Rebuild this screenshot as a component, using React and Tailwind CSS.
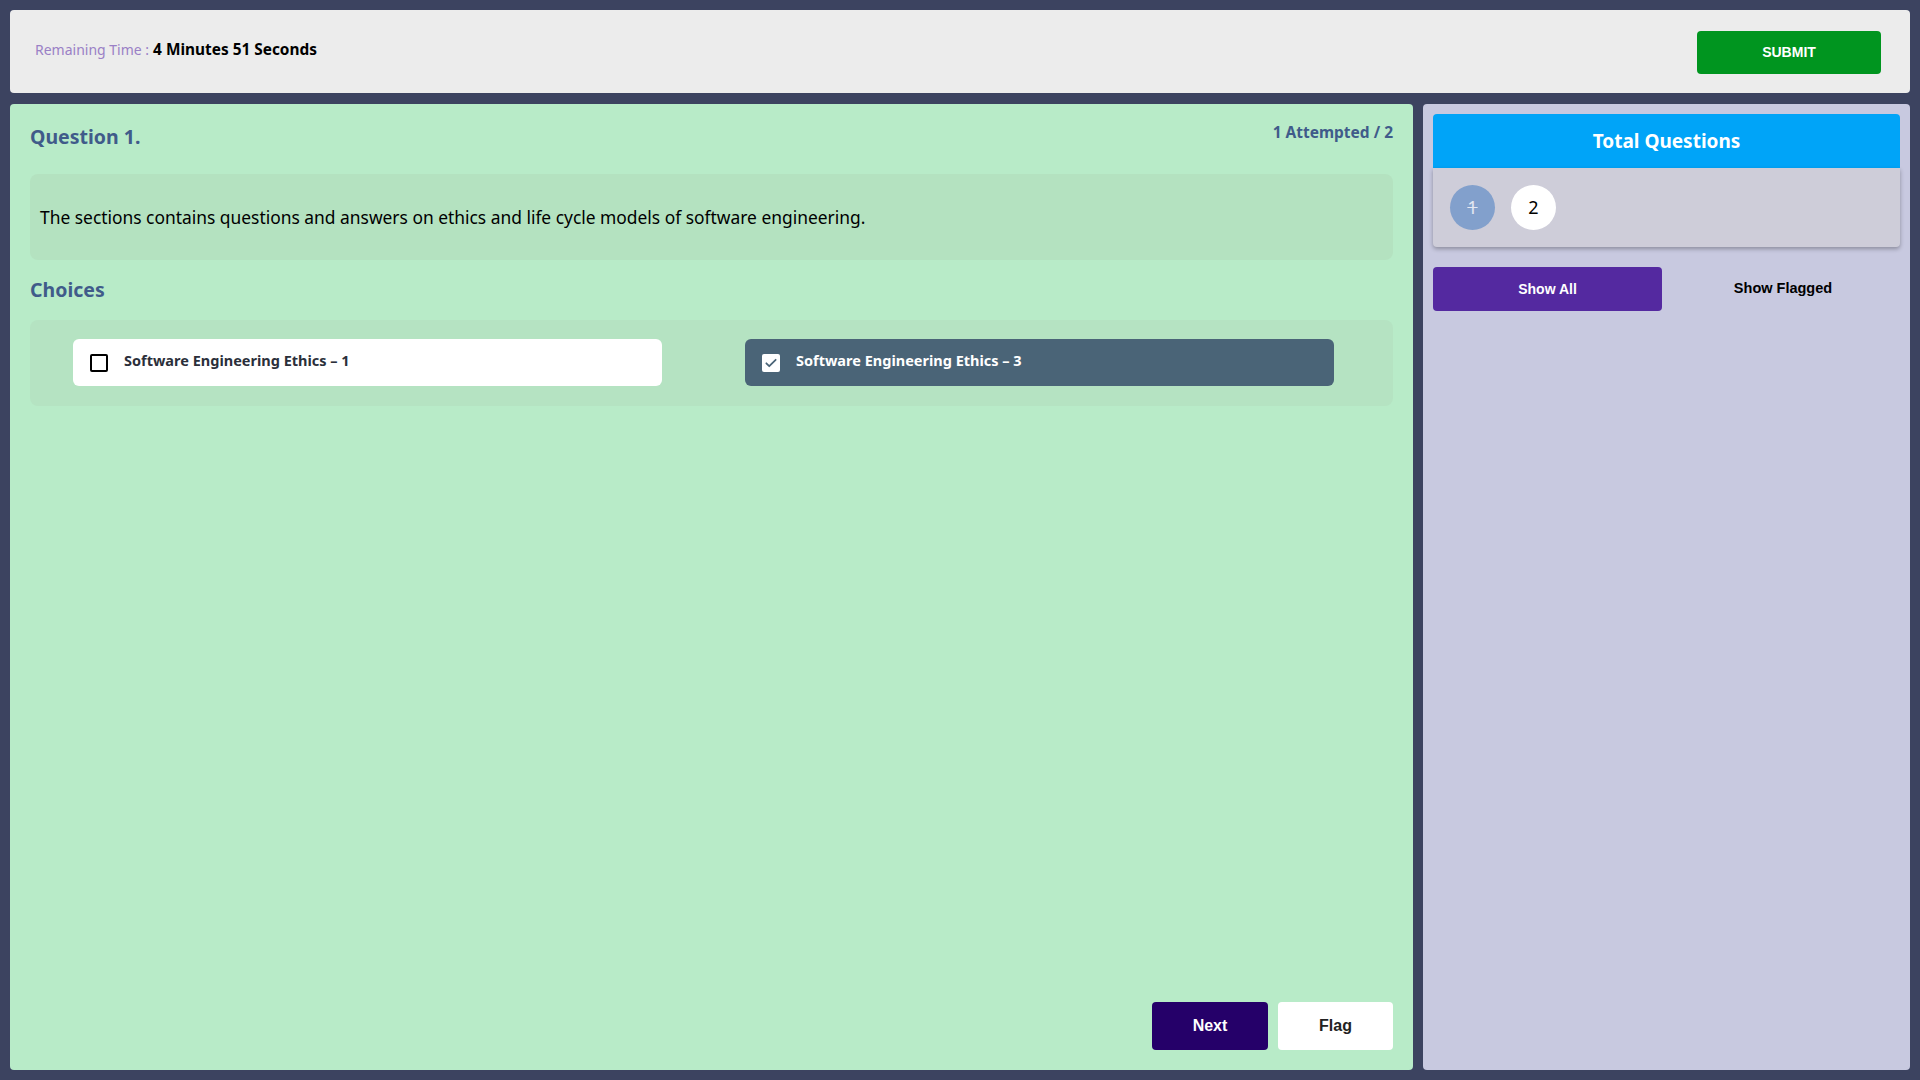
import React, { useState } from 'react';

const choices = [
    { id: 1, text: 'Software Engineering Ethics – 1' },
    { id: 3, text: 'Software Engineering Ethics – 3' }
];

const App = () => {
    const [selected, setSelected] = useState(3);
    const [filter, setFilter] = useState('all');

    return (
        <div className="h-screen w-full bg-[#3c4360] p-[10px] flex flex-col gap-[11px] font-['Noto_Sans',sans-serif]">
            {/* header */}
            <div className="h-[83px] bg-[#ececec] rounded-[4px] flex items-center justify-between pl-[25px] pr-[29px] shrink-0">
                <div className="flex items-baseline gap-[4px] -mt-[4px]">
                    <span className="text-[14px] text-[#9a80c6]">Remaining Time :</span>
                    <span className="text-[15.4px] font-bold text-black">4 Minutes 51 Seconds</span>
                </div>
                <button className="w-[184px] h-[43px] bg-[#00951f] rounded-[4px] text-white text-[14px] font-bold font-['Liberation_Sans',sans-serif] mt-[1px]">
                    SUBMIT
                </button>
            </div>

            <div className="flex-1 flex gap-[10px] min-h-0">
                {/* question panel */}
                <div className="w-[1403px] bg-[#b8ebc8] rounded-[4px] px-[20px] pt-[18px] pb-[20px] flex flex-col">
                    <div className="flex justify-between items-start">
                        <h2 className="text-[19.5px] font-bold text-[#405b8a]">Question 1.</h2>
                        <span className="text-[15.5px] font-bold text-[#405b8a] -mt-[1px]">1 Attempted / 2</span>
                    </div>

                    <div className="mt-[23px] h-[86px] bg-[#b4e2c0] rounded-[8px] flex items-center px-[10px]">
                        <p className="text-[17.4px] text-black">
                            The sections contains questions and answers on ethics and life cycle models of software engineering.
                        </p>
                    </div>

                    <h3 className="mt-[15px] text-[19.5px] font-bold text-[#405b8a]">Choices</h3>

                    <div className="mt-[15px] h-[86px] bg-[#b5e3c2] rounded-[8px] flex items-center pl-[43px] gap-[83px]">
                        {choices.map((c) => {
                            const on = selected === c.id;
                            return (
                                <button
                                    key={c.id}
                                    onClick={() => setSelected(c.id)}
                                    className={`w-[589px] h-[47px] rounded-[6px] flex items-center gap-[16px] pl-[17px] text-left ${on ? 'bg-[#4a6477] text-white' : 'bg-white text-[#2b2f3a]'}`}
                                >
                                    {on ? (
                                        <span className="w-[18px] h-[18px] bg-white rounded-[2px] flex items-center justify-center">
                                            <svg width="14" height="14" viewBox="0 0 24 24" fill="none" stroke="#4a6477" strokeWidth="3" strokeLinecap="round" strokeLinejoin="round">
                                                <path d="M4 12.5l5 5L20 6.5" />
                                            </svg>
                                        </span>
                                    ) : (
                                        <span className="w-[18px] h-[18px] border-[2px] border-black rounded-[2px] bg-white" />
                                    )}
                                    <span className="text-[14.5px] font-bold -mt-[4px]">{c.text}</span>
                                </button>
                            );
                        })}
                    </div>

                    <div className="mt-auto flex justify-end gap-[10px]">
                        <button className="w-[116px] h-[48px] bg-[#250069] rounded-[4px] text-white text-[16px] font-bold font-['Liberation_Sans',sans-serif]">
                            Next
                        </button>
                        <button className="w-[115px] h-[48px] bg-white rounded-[4px] text-[#222] text-[16px] font-bold font-['Liberation_Sans',sans-serif]">
                            Flag
                        </button>
                    </div>
                </div>

                {/* sidebar */}
                <div className="flex-1 bg-[#c8c9e0] rounded-[4px] p-[10px]">
                    <div className="h-[54px] bg-[#00a4f8] rounded-t-[4px] flex items-center justify-center">
                        <span className="text-white text-[19px] font-bold">Total Questions</span>
                    </div>
                    <div className="h-[79px] bg-[#cecdd9] rounded-b-[4px] shadow-[0_2px_4px_rgba(0,0,0,0.3)] flex items-center gap-[16px] px-[17px]">
                        <span className="w-[45px] h-[45px] rounded-full bg-[#82a0cc] flex items-center justify-center text-[#e4e8f2] text-[18px] line-through">1</span>
                        <span className="w-[45px] h-[45px] rounded-full bg-white flex items-center justify-center text-black text-[18px]">2</span>
                    </div>
                    <div className="mt-[20px] flex">
                        <button
                            onClick={() => setFilter('all')}
                            className="w-[229px] h-[44px] bg-[#5429a0] rounded-[4px] text-white text-[14px] font-bold font-['Liberation_Sans',sans-serif]"
                        >
                            Show All
                        </button>
                        <button
                            onClick={() => setFilter('flagged')}
                            className="flex-1 h-[44px] text-black text-[14.5px] font-bold font-['Liberation_Sans',sans-serif] pl-[4px]"
                        >
                            Show Flagged
                        </button>
                    </div>
                </div>
            </div>
        </div>
    );
};

export default App;
